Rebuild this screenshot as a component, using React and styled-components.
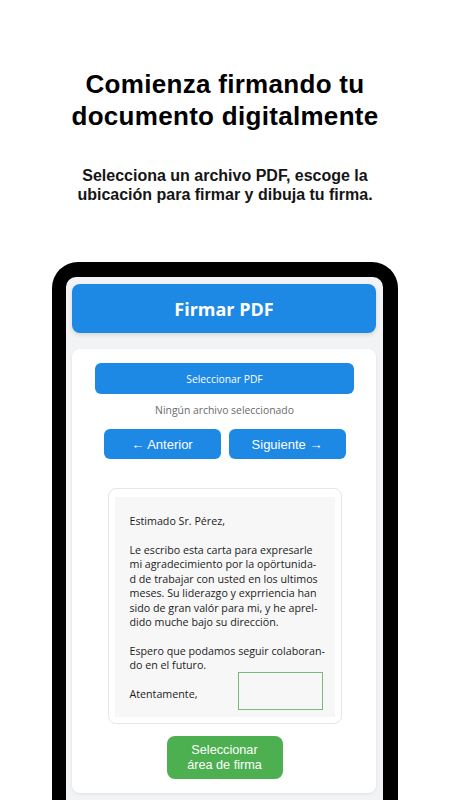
import React from 'react';
import styled, { createGlobalStyle } from 'styled-components';

const GlobalStyle = createGlobalStyle`
	html, body {
		margin: 0;
		padding: 0;
		background: #ffffff;
		overflow: hidden;
	}
	* {
		box-sizing: border-box;
	}
`;

const Page = styled.div`
	display: flex;
	flex-direction: column;
	align-items: center;
	height: 800px;
	overflow: hidden;
	padding-top: 68px;
	font-family: 'Liberation Sans', Arial, sans-serif;
`;

const Title = styled.h1`
	margin: 0;
	font-size: 26px;
	line-height: 32px;
	font-weight: 700;
	letter-spacing: 0.3px;
	text-align: center;
	color: #000;
`;

const Subtitle = styled.p`
	margin: 34px 0 0;
	font-size: 16px;
	line-height: 19px;
	font-weight: 700;
	text-align: center;
	color: #151515;
`;

const Phone = styled.div`
	margin-top: 58px;
	width: 346px;
	flex-shrink: 0;
	background: #000;
	border-radius: 26px 26px 0 0;
	padding: 15px 15px 0 14px;
`;

const Screen = styled.div`
	background: #f2f3f5;
	border-radius: 10px 10px 0 0;
	padding: 7px 7px 40px 6px;
	display: flex;
	flex-direction: column;
	gap: 16px;
`;

const Header = styled.header`
	height: 49px;
	border-radius: 8px;
	background: #1e88e5;
	box-shadow: 0 2px 4px rgba(0, 0, 0, 0.12);
	display: flex;
	align-items: center;
	justify-content: center;
	color: #fff;
	font-family: 'Open Sans', 'Noto Sans', sans-serif;
	font-size: 18px;
	font-weight: 700;
`;

const Card = styled.section`
	background: #fff;
	border-radius: 8px;
	box-shadow: 0 1px 3px rgba(0, 0, 0, 0.08);
	padding: ${(p) => p.$pad || '14px 22px 14px 23px'};
	display: flex;
	flex-direction: column;
	align-items: center;
	min-height: ${(p) => p.$minHeight || 'auto'};
`;

const PickButton = styled.button`
	width: 100%;
	height: 31px;
	border: none;
	border-radius: 6px;
	background: #1e88e5;
	color: #fff;
	font-family: 'Open Sans', 'Noto Sans', sans-serif;
	font-size: 10.3px;
	padding: 0;
`;

const FileStatus = styled.div`
	margin-top: 8px;
	line-height: 16px;
	font-family: 'Open Sans', 'Noto Sans', sans-serif;
	font-size: 10.4px;
	color: #6b6b6b;
`;

const NavRow = styled.div`
	margin-top: 11px;
	display: flex;
	gap: 8px;
`;

const NavButton = styled.button`
	width: 117px;
	height: 30px;
	border: none;
	border-radius: 6px;
	background: #1e88e5;
	color: #fff;
	font-family: 'Liberation Sans', Arial, sans-serif;
	font-size: 13px;
	padding: 0;
`;

const LetterFrame = styled.div`
	margin-top: 29px;
	width: 234px;
	border: 1px solid #e6e6e6;
	border-radius: 8px;
	padding: 8px 6px 6px;
`;

const Paper = styled.div`
	position: relative;
	height: 220px;
	background: #f7f7f7;
	padding: 17px 15px 0;
	font-family: 'Open Sans', 'Noto Sans', sans-serif;
	font-size: 10.7px;
	line-height: 14.5px;
	color: #1c1c1c;
	white-space: nowrap;
`;

const Para = styled.p`
	margin: 0 0 14px;
`;

const SignatureSpot = styled.div`
	position: absolute;
	right: 12px;
	bottom: 7px;
	width: 85px;
	height: 38px;
	border: 1px solid #7cb87c;
`;

const AreaButton = styled.button`
	margin-top: 12px;
	width: 116px;
	height: 43px;
	border: none;
	border-radius: 8px;
	background: #4caf50;
	color: #fff;
	font-family: 'Liberation Sans', Arial, sans-serif;
	font-size: 12.7px;
	line-height: 15px;
	padding: 0;
`;

export default function App() {
	return (
		<>
			<GlobalStyle />
			<Page>
				<Title>
					Comienza firmando tu
					<br />
					documento digitalmente
				</Title>
				<Subtitle>
					Selecciona un archivo PDF, escoge la
					<br />
					ubicación para firmar y dibuja tu firma.
				</Subtitle>

				<Phone>
					<Screen>
						<Header>Firmar PDF</Header>

						<Card>
							<PickButton>Seleccionar PDF</PickButton>
							<FileStatus>Ningún archivo seleccionado</FileStatus>
							<NavRow>
								<NavButton>← Anterior</NavButton>
								<NavButton>Siguiente →</NavButton>
							</NavRow>

							<LetterFrame>
								<Paper>
									<Para>Estimado Sr. Pérez,</Para>
									<Para>
										Le escribo esta carta para expresarle
										<br />
										mi agradecimiento por la opörtunida-
										<br />
										d de trabajar con usted en los ultimos
										<br />
										meses. Su liderazgo y exprriencia han
										<br />
										sido de gran valór para mi, y he aprel-
										<br />
										dido muche bajo su direcciön.
									</Para>
									<Para>
										Espero que podamos seguir colaboran-
										<br />
										do en el futuro.
									</Para>
									<Para>Atentamente,</Para>
									<SignatureSpot />
								</Paper>
							</LetterFrame>

							<AreaButton>
								Seleccionar
								<br />
								área de firma
							</AreaButton>
						</Card>

						<Card $pad="0" $minHeight="160px" />
					</Screen>
				</Phone>
			</Page>
		</>
	);
}
